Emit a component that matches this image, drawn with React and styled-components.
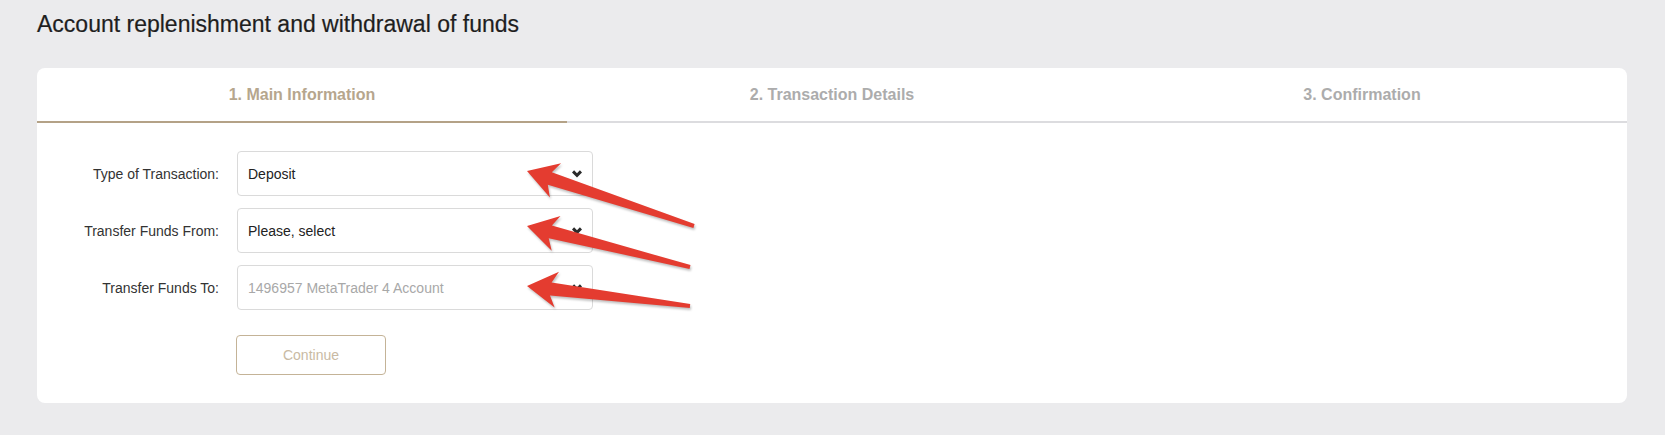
import styled, { createGlobalStyle } from 'styled-components';

const GlobalStyle = createGlobalStyle`
  body {
    margin: 0;
    background-color: #ebebed;
    font-family: 'Liberation Sans', Arial, sans-serif;
  }
`;

const Page = styled.div`
  padding: 0 38px 0 37px;
  min-height: 435px;
  box-sizing: border-box;
`;

const Title = styled.h1`
  margin: 0;
  padding-top: 11px;
  font-size: 23px;
  line-height: 26px;
  font-weight: 400;
  color: #1e1e1e;
  -webkit-text-stroke: 0.2px #1e1e1e;
`;

const Card = styled.div`
  position: relative;
  margin-top: 31px;
  background-color: #fff;
  border-radius: 8px;
`;

const Tabs = styled.div`
  display: grid;
  grid-template-columns: repeat(3, 1fr);
  border-bottom: 2px solid #dcdcdf;
`;

const Tab = styled.div`
  height: 53px;
  display: flex;
  align-items: center;
  justify-content: center;
  font-size: 16px;
  font-weight: 700;
  color: ${(p) => (p.$active ? '#b6a68d' : '#acacac')};
  border-bottom: 2px solid ${(p) => (p.$active ? '#b4a287' : 'transparent')};
  margin-bottom: -2px;
`;

const Form = styled.div`
  display: flex;
  flex-direction: column;
  gap: 12px;
  padding: 28px 0 28px;
`;

const Row = styled.div`
  display: grid;
  grid-template-columns: 182px 356px;
  column-gap: 18px;
  align-items: center;
`;

const Label = styled.label`
  text-align: right;
  font-size: 14px;
  color: #333;
`;

const Select = styled.div`
  height: 45px;
  box-sizing: border-box;
  border: 1px solid #dadada;
  border-radius: 4px;
  display: flex;
  align-items: center;
  justify-content: space-between;
  padding: 0 10px;
  font-size: 14px;
  color: ${(p) => (p.$disabled ? '#a8a8a8' : '#222')};
`;

const Chevron = styled.svg`
  width: 10px;
  height: 8px;
`;

const ButtonRow = styled.div`
  padding-left: 199px;
  margin-top: 13px;
`;

const Button = styled.button`
  width: 150px;
  height: 40px;
  background: #fff;
  border: 1px solid #c4b397;
  border-radius: 4px;
  font-family: 'Liberation Sans', Arial, sans-serif;
  font-size: 14px;
  color: #c9baa3;
`;

const Overlay = styled.svg`
  position: absolute;
  left: -37px;
  top: -68px;
  width: 1665px;
  height: 435px;
  pointer-events: none;
  filter: drop-shadow(1px 2px 1px rgba(0, 0, 0, 0.25));
`;

function arrowPoints(tip, tail) {
  const dx = tail[0] - tip[0];
  const dy = tail[1] - tip[1];
  const len = Math.hypot(dx, dy);
  const u = [dx / len, dy / len];
  const n = [-u[1], u[0]];
  const at = (d, w) => [tip[0] + u[0] * d + n[0] * w, tip[1] + u[1] * d + n[1] * w];
  const pts = [
    tip,
    at(30, -18),
    at(24, -6.5),
    at(len, -2),
    at(len, 2),
    at(24, 6.5),
    at(30, 18),
  ];
  return pts.map((p) => p.map((v) => v.toFixed(1)).join(',')).join(' ');
}

const arrows = [
  { tip: [527, 171], tail: [694, 226] },
  { tip: [527, 226], tail: [690, 267] },
  { tip: [527, 286], tail: [690, 306] },
];

function ChevronIcon() {
  return (
    <Chevron viewBox="0 0 10 8">
      <path d="M0 2.4 L2.1 0.3 L5 3.2 L7.9 0.3 L10 2.4 L5 7.4 Z" fill="#2b2b2b" />
    </Chevron>
  );
}

const fields = [
  { label: 'Type of Transaction:', value: 'Deposit' },
  { label: 'Transfer Funds From:', value: 'Please, select' },
  { label: 'Transfer Funds To:', value: '1496957 MetaTrader 4 Account', disabled: true },
];

export default function App() {
  return (
    <>
      <GlobalStyle />
      <Page>
        <Title>Account replenishment and withdrawal of funds</Title>
        <Card>
          <Tabs>
            <Tab $active>1. Main Information</Tab>
            <Tab>2. Transaction Details</Tab>
            <Tab>3. Confirmation</Tab>
          </Tabs>
          <Form>
            {fields.map((f) => (
              <Row key={f.label}>
                <Label>{f.label}</Label>
                <Select $disabled={f.disabled}>
                  <span>{f.value}</span>
                  <ChevronIcon />
                </Select>
              </Row>
            ))}
            <ButtonRow>
              <Button>Continue</Button>
            </ButtonRow>
          </Form>
          <Overlay viewBox="0 0 1665 435">
            {arrows.map((a, i) => (
              <polygon key={i} points={arrowPoints(a.tip, a.tail)} fill="#e43c30" />
            ))}
          </Overlay>
        </Card>
      </Page>
    </>
  );
}
